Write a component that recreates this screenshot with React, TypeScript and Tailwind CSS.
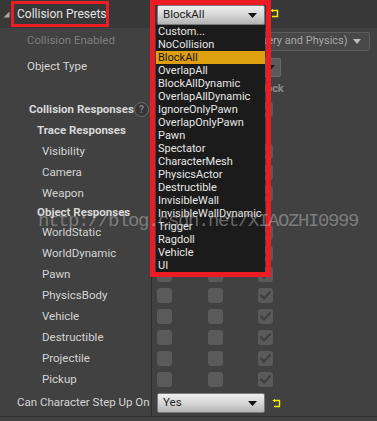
import React from "react";

const FONT = { fontFamily: "Roboto, 'Noto Sans', sans-serif" };

function Checkbox({ checked, className = "" }: { checked?: boolean; className?: string }) {
  return (
    <div className={`w-[15px] h-[15px] rounded-[3px] bg-[#5a5a5a] flex items-center justify-center shrink-0 ${className}`}>
      {checked && (
        <svg width="11" height="9" viewBox="0 0 11 9">
          <path d="M1.2 4.6 L4 7.4 L9.8 1.4" stroke="#3f3f3f" strokeWidth="2.2" fill="none" strokeLinecap="square" />
        </svg>
      )}
    </div>
  );
}

function Boxes({ block = true }: { block?: boolean }) {
  return (
    <div className="flex">
      <Checkbox />
      <Checkbox className="ml-[36px]" />
      <Checkbox className="ml-[35px]" checked={block} />
    </div>
  );
}

function ResetArrow({ className = "" }: { className?: string }) {
  return (
    <svg className={className} width="9" height="9" viewBox="0 0 9 9">
      <path d="M2.5 1.5 H7.5 V7.5 H2" stroke="#f2ee00" strokeWidth="1.4" fill="none" />
      <path d="M0.5 1.5 L3 -0.2 L3 3.2 Z" fill="#f2ee00" />
    </svg>
  );
}

function Row({
  h,
  label,
  labelClass,
  right,
  extra,
}: {
  h: string;
  label: React.ReactNode;
  labelClass: string;
  right?: React.ReactNode;
  extra?: React.ReactNode;
}) {
  return (
    <div className={`flex ${h}`}>
      <div className={`w-[151px] flex items-center justify-between ${labelClass}`}>
        <span className="whitespace-nowrap">{label}</span>
        {extra}
      </div>
      <div className="w-px bg-[#2d2d2d]" />
      <div className="flex-1 flex items-center pl-[5px]">{right}</div>
    </div>
  );
}

function LightCombo({ text, className = "" }: { text: string; className?: string }) {
  return (
    <div
      className={`h-[20px] w-[108px] rounded-[2px] border border-[#7a7a7a] bg-gradient-to-b from-[#f0f0f0] via-[#d6d6d6] to-[#b4b4b4] flex items-center justify-between pl-[5px] pr-[7px] text-[11.5px] text-[#1e1e1e] ${className}`}
    >
      <span>{text}</span>
      <svg width="9" height="5" viewBox="0 0 9 5">
        <path d="M0 0 H9 L4.5 5 Z" fill="#111" />
      </svg>
    </div>
  );
}

const items = [
  "Custom...",
  "NoCollision",
  "BlockAll",
  "OverlapAll",
  "BlockAllDynamic",
  "OverlapAllDynamic",
  "IgnoreOnlyPawn",
  "OverlapOnlyPawn",
  "Pawn",
  "Spectator",
  "CharacterMesh",
  "PhysicsActor",
  "Destructible",
  "InvisibleWall",
  "InvisibleWallDynamic",
  "Trigger",
  "Ragdoll",
  "Vehicle",
  "UI",
];

const sub = "pl-[42px] text-[11.5px] text-[#d4d4d4]";

export default function App() {
  return (
    <div className="relative w-[377px] h-[421px] overflow-hidden bg-[#414141]" style={FONT}>
      {/* header row */}
      <div className="flex h-[28px] bg-[#383838]">
        <div className="w-[151px] relative flex items-center">
          <svg className="absolute left-[3px] top-[11px]" width="7" height="7" viewBox="0 0 7 7">
            <path d="M6.5 0.5 V6.5 H0.5 Z" fill="#a8a8a8" />
          </svg>
          <div className="ml-[11px] h-[26px] mt-[-1px] w-[98px] border-[3px] border-[#ec1c24] flex items-center pl-[3px] text-[12px] text-[#e4e4e4] whitespace-nowrap">
            Collision Presets
          </div>
        </div>
        <div className="w-px bg-[#2d2d2d]" />
        <div className="flex-1 relative">
          <ResetArrow className="absolute left-[118px] top-[9px]" />
        </div>
      </div>

      <Row
        h="h-[26px]"
        label="Collision Enabled"
        labelClass="pl-[27px] text-[11.5px] text-[#7e7e7e]"
        right={
          <div className="h-[19px] w-[213px] rounded-[2px] border border-[#5c5c5c] bg-[#484848] flex items-center justify-between pl-[5px] pr-[8px] text-[11px] text-[#a6a6a6]">
            <span className="whitespace-nowrap">Collision Enabled (Query and Physics)</span>
            <svg width="8" height="5" viewBox="0 0 8 5">
              <path d="M0 0 H8 L4 5 Z" fill="#bdbdbd" />
            </svg>
          </div>
        }
      />
      <Row
        h="h-[26px]"
        label="Object Type"
        labelClass="pl-[27px] text-[11.5px] text-[#d4d4d4]"
        right={
          <div className="h-[19px] w-[124px] rounded-[2px] border border-[#6a6a6a] bg-[#5a5a5a] flex items-center justify-between pl-[5px] pr-[5px] text-[11.5px] text-[#222]">
            <span>WorldStatic</span>
            <svg width="9" height="5" viewBox="0 0 9 5">
              <path d="M0 0 H9 L4.5 5 Z" fill="#1c1c1c" />
            </svg>
          </div>
        }
      />
      <Row
        h="h-[18px]"
        label=""
        labelClass=""
        right={
          <div className="flex text-[11px] font-bold text-[#8a8a8a] whitespace-nowrap">
            <span className="w-[46px]">Ignore</span>
            <span className="w-[53px]">Overlap</span>
            <span>Block</span>
          </div>
        }
      />
      <Row
        h="h-[23px]"
        label="Collision Responses"
        labelClass="pl-[29px] pr-[2px] text-[11.5px] font-bold text-[#d8d8d8]"
        extra={
          <div className="w-[15px] h-[15px] rounded-full border-[1.5px] border-[#6e6e6e] bg-[#363636] flex items-center justify-center text-[10px] font-bold text-[#7c7c7c] leading-none">
            ?
          </div>
        }
        right={<Boxes />}
      />
      <Row h="h-[20px]" label="Trace Responses" labelClass="pl-[37px] text-[11.5px] font-bold text-[#d8d8d8]" />
      {["Visibility", "Camera", "Weapon"].map((t) => (
        <Row key={t} h="h-[21px]" label={t} labelClass={sub} right={<Boxes />} />
      ))}
      <Row h="h-[18px]" label="Object Responses" labelClass="pl-[37px] text-[11.5px] font-bold text-[#d8d8d8]" />
      {["WorldStatic", "WorldDynamic", "Pawn", "PhysicsBody", "Vehicle", "Destructible", "Projectile", "Pickup"].map((t) => (
        <Row key={t} h="h-[21px]" label={t} labelClass={sub} right={<Boxes />} />
      ))}
      <Row
        h="h-[26px]"
        label="Can Character Step Up On"
        labelClass="pl-[17px] text-[11.5px] text-[#d4d4d4]"
        right={
          <div className="flex items-center">
            <LightCombo text="Yes" />
            <ResetArrow className="ml-[7px]" />
          </div>
        }
      />
      <div className="h-px bg-[#2e2e2e]" />

      {/* open dropdown */}
      <div className="absolute left-[150px] top-0 w-[121px] h-[277px] border-[5px] border-[#ec1c24] flex flex-col">
        <LightCombo text="BlockAll" className="ml-[2px]" />
        <div className="ml-[1px] w-[109px] h-[247px] bg-[#1b1b1b] flex flex-col">
          {items.map((t) => (
            <div
              key={t}
              className={`h-[13px] leading-[13px] pl-[2px] text-[11px] whitespace-nowrap ${
                t === "BlockAll" ? "bg-[#dfa00f] text-[#161616]" : "text-[#e6e6e6]"
              }`}
            >
              {t}
            </div>
          ))}
        </div>
      </div>

      {/* watermark */}
      <div
        className="absolute left-[38px] top-[212px] text-[19px] leading-none tracking-[-1.4px] text-[rgba(200,200,200,0.45)] whitespace-nowrap pointer-events-none"
        style={{ fontFamily: "'Liberation Mono', monospace" }}
      >
        http://blog.csdn.net/XIAOZHI0999
      </div>
    </div>
  );
}
